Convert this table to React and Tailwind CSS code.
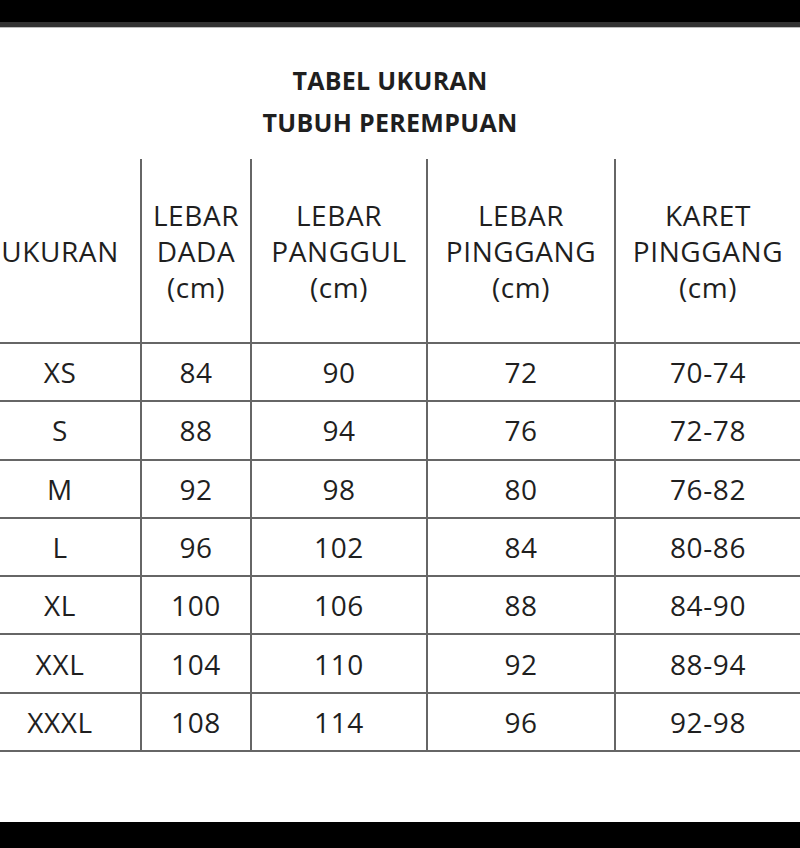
import React from 'react';

const columns = [
  { key: 'size', label: ['UKURAN'] },
  { key: 'dada', label: ['LEBAR', 'DADA', '(cm)'] },
  { key: 'panggul', label: ['LEBAR', 'PANGGUL', '(cm)'] },
  { key: 'pinggang', label: ['LEBAR', 'PINGGANG', '(cm)'] },
  { key: 'karet', label: ['KARET', 'PINGGANG', '(cm)'] },
];

const rows = [
  ['XS', '84', '90', '72', '70-74'],
  ['S', '88', '94', '76', '72-78'],
  ['M', '92', '98', '80', '76-82'],
  ['L', '96', '102', '84', '80-86'],
  ['XL', '100', '106', '88', '84-90'],
  ['XXL', '104', '110', '92', '88-94'],
  ['XXXL', '108', '114', '96', '92-98'],
];

// column widths match the lines in the photo: 140 / 250 / 426 / 614
const gridCols = 'grid grid-cols-[140px_110px_176px_188px_186px]';

const Cell = ({ index, children, className = '' }) => (
  <div
    className={`flex items-center justify-center text-center ${
      index > 0 ? 'border-l-2 border-[#666]' : 'pr-5'
    } ${className}`}
  >
    {children}
  </div>
);

const App = () => {
  return (
    <div
      className="flex h-[848px] w-[800px] flex-col overflow-hidden bg-white text-[#1f1f1f]"
      style={{ fontFamily: '"Open Sans", "Noto Sans", sans-serif' }}
    >
      <div className="h-[22px] bg-black" />
      <div className="h-[5px] bg-[#333]" />
      <div className="h-px bg-[#bdbdbd]" />

      <main className="flex-1">
        <div className="pt-[31px] pr-[20px] text-center text-[25px] font-bold leading-[42px] tracking-[0.3px]">
          <div>TABEL UKURAN</div>
          <div>TUBUH PEREMPUAN</div>
        </div>

        <div className="mt-[16px] text-[28px] font-medium tracking-[0.6px]">
          <div className={`${gridCols} h-[185px] border-b-2 border-[#666] leading-[36px]`}>
            {columns.map((col, i) => (
              <Cell key={col.key} index={i} className="flex-col">
                {col.label.map((line) => (
                  <span key={line} className="whitespace-nowrap">
                    {line}
                  </span>
                ))}
              </Cell>
            ))}
          </div>

          {rows.map((row) => (
            <div key={row[0]} className={`${gridCols} h-[58.3px] border-b-2 border-[#666]`}>
              {row.map((value, i) => (
                <Cell key={i} index={i}>
                  {value}
                </Cell>
              ))}
            </div>
          ))}
        </div>
      </main>

      <div className="h-[26px] bg-black" />
    </div>
  );
};

export default App;
